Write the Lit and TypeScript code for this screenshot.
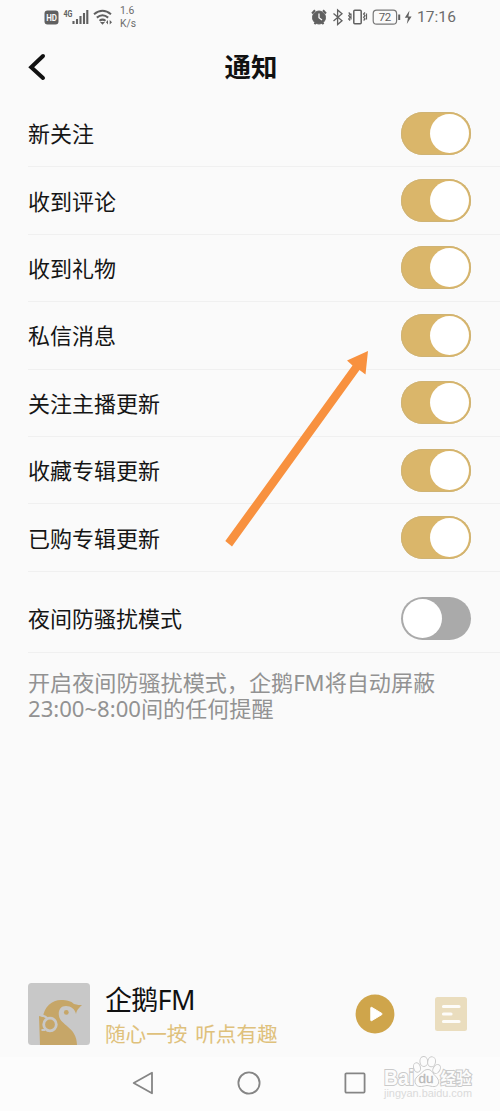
import { LitElement, html, css, svg } from "lit";
import { customElement, property } from "lit/decorators.js";
import { classMap } from "lit/directives/class-map.js";

@customElement("toggle-switch")
class ToggleSwitch extends LitElement {
  @property({ type: Boolean }) on = false;
  static styles = css`
    :host { display: block; flex: none; }
    .track { box-sizing: border-box; display: flex; align-items: center; width: 70px; height: 43px; padding: 0 2px; border-radius: 22px; background: #aaa; }
    .track.on { justify-content: flex-end; background: #dab66a; box-shadow: inset 0 0 0 1px #cfb374; }
    .knob { width: 39px; height: 39px; border-radius: 50%; background: #fff; }
  `;
  render() {
    return html`<div class=${classMap({ track: true, on: this.on })}><div class="knob"></div></div>`;
  }
}

@customElement("status-bar")
class StatusBar extends LitElement {
  static styles = css`
    :host { display: flex; justify-content: space-between; height: 34px; box-sizing: border-box; padding: 0 44px 0 43px; color: #6c6c6c; font-family: Roboto, sans-serif; }
    svg { display: block; }
    .left { display: flex; }
    .net { display: flex; flex-direction: column; font-size: 10.3px; line-height: 12.5px; padding: 5px 0 0 4px; }
    .right { display: flex; }
    .time { font-size: 15.5px; line-height: 35px; letter-spacing: 0.1px; margin-left: 3px; }
  `;
  render() {
    return html`
      <div class="left">
        <svg width="73" height="34" viewBox="43 0 73 34">
          <rect x="44.5" y="10.5" width="14" height="14" rx="3" fill="#606060" />
          <text x="46.2" y="21.4" font-size="9.5" font-weight="700" fill="#fafafa" textLength="10.8" lengthAdjust="spacingAndGlyphs">HD</text>
          <text x="63.5" y="16.5" font-size="9" font-weight="700" fill="#606060" textLength="9" lengthAdjust="spacingAndGlyphs">4G</text>
          <path d="M73.5 24v-3M77 24v-5M80.5 24v-8M84 24v-11M87.3 24v-14" stroke="#606060" stroke-width="2.1" />
          <path d="M94 14.2q8.5-7 17 0M96.8 17.6q5.7-4.6 11.4 0M99.5 20.8q3-2.4 6 0" fill="none" stroke="#606060" stroke-width="2" />
          <path d="M100 22h5l-2.5 2.8z" fill="#606060" />
          <path d="M106 22.3l2-2.3v4.6zM112 22.3l-2.3-2.3v4.6z" fill="#606060" />
        </svg>
        <div class="net"><span>1.6</span><span>K/s</span></div>
      </div>
      <div class="right">
        <svg width="104" height="34" viewBox="310 0 104 34" fill="none" stroke="#606060">
          <circle cx="319" cy="17.5" r="6.5" fill="#606060" />
          <path d="M312 13.5l3-3.2M326 13.5l-3-3.2M314.5 24.2l1.2-1.6M323.5 24.2l-1.2-1.6" stroke-width="2" />
          <path d="M319 13.5v4.2l3 2.3" stroke="#fafafa" stroke-width="1.3" />
          <path d="M333.5 13.5l8.5 7.2-4.4 3.8v-14.5l4.4 3.7-8.5 7.3" stroke-width="1.3" />
          <rect x="353.8" y="10.2" width="7.4" height="13.6" rx="1" stroke-width="1.5" />
          <path d="M348.7 12.5l1.4 1.6-1.4 1.6 1.4 1.6-1.4 1.6 1.4 1.6M351 13.5v6M365 12.5l-1.4 1.6 1.4 1.6-1.4 1.6 1.4 1.6-1.4 1.6M366.5 13.5v6" stroke-width="1.2" />
          <rect x="373.2" y="10.2" width="23.4" height="14" rx="3.5" stroke="#777" stroke-width="1.2" />
          <text x="378.7" y="21.3" font-size="11.5" fill="#606060" stroke="none" textLength="12.5">72</text>
          <path d="M399.2 14.5v5.5" stroke-width="2" />
          <path d="M409.5 10.5l-4.7 7.3h3.2l-1.2 6.2 4.8-7.5h-3.2z" fill="#606060" stroke="none" />
        </svg>
        <span class="time">17:16</span>
      </div>`;
  }
}

@customElement("setting-row")
class SettingRow extends LitElement {
  @property() label = "";
  @property({ type: Boolean }) on = false;
  static styles = css`
    :host { display: flex; justify-content: space-between; align-items: center; box-sizing: border-box; height: 67.4px; margin-left: 28px; padding-right: 29px; border-bottom: 1px solid #f0f0f0; }
    .label { font-size: 22px; line-height: 30px; color: #151515; }
  `;
  render() {
    return html`<span class="label">${this.label}</span><toggle-switch ?on=${this.on}></toggle-switch>`;
  }
}

@customElement("mini-player")
class MiniPlayer extends LitElement {
  static styles = css`
    :host { display: flex; align-items: flex-start; padding: 0 33px 0 28px; height: 74px; }
    svg { display: block; flex: none; }
    .info { display: flex; flex-direction: column; flex: 1; padding-left: 15px; white-space: nowrap; }
    .name { font-size: 27px; line-height: 34px; color: #101010; letter-spacing: -0.7px; }
    .sub { font-size: 20.6px; line-height: 34px; color: #dfc17c; word-spacing: 2.5px; }
    .play { margin: 11px 40px 0 0; }
    .list { margin-top: 14px; }
  `;
  render() {
    return html`
      <svg width="62" height="62" viewBox="0 0 62 62">
        <rect width="62" height="62" rx="3.5" fill="#c8c8c8" />
        <path d="M12 62L11 33l4 1C16 24 24 17 33 17c6 0 10 1 13 4 3 1 6 1 8 1-2 2-5 4-6 9-1-5-5-8-10-8-6 0-8 5-7 10 1 9 18 11 18 29z" fill="#c6a668" />
        <circle cx="38.3" cy="29.4" r="2.4" fill="#c6a668" />
        <circle cx="22" cy="41.5" r="6.3" fill="#c6a668" stroke="#c8c8c8" stroke-width="2.8" />
        <path d="M13.5 32.5q5 1 6 3.5M13.5 47l3.5 0" fill="none" stroke="#c8c8c8" stroke-width="2" />
      </svg>
      <div class="info">
        <span class="name">企鹅FM</span>
        <span class="sub">随心一按 听点有趣</span>
      </div>
      <svg class="play" width="40" height="40" viewBox="0 0 40 40">
        <circle cx="20" cy="20" r="19.4" fill="#cfa54b" />
        <path d="M15.8 13.8v12.4q0 1 1 .4l10-6q.8-.6 0-1.2l-10-6q-1-.5-1 .4z" fill="#fff" stroke="#fff" stroke-linejoin="round" />
      </svg>
      <svg class="list" width="32" height="34" viewBox="0 0 32 34">
        <rect width="32" height="34" rx="2.5" fill="#eaddbe" />
        <path d="M8.5 9.5h15.5M8.5 17h7.5M8.5 24.5h15.5" stroke="#fdfcf9" stroke-width="3.2" stroke-linecap="round" />
      </svg>`;
  }
}

@customElement("site-watermark")
class SiteWatermark extends LitElement {
  static styles = css`
    :host { display: block; }
    svg { display: block; font-family: "Liberation Sans", "Noto Sans CJK SC", sans-serif; }
  `;
  render() {
    const toes = [[417, 1067.5, 3.4, 4.8, -15], [423.8, 1061.5, 3.9, 5, -5], [431.6, 1061.8, 3.9, 5, 10], [436.6, 1069, 3.4, 4.8, 30]];
    return html`<svg width="98" height="50" viewBox="380 1055 98 50" fill="#fcfcfc" stroke="#cacaca" stroke-width="1">
      ${toes.map(([x, y, rx, ry, a]) => svg`<ellipse cx=${x} cy=${y} rx=${rx} ry=${ry} transform="rotate(${a} ${x} ${y})" />`)}
      <g paint-order="stroke" stroke-width="2">
        <text x="384" y="1085" font-size="21.5" font-weight="700" textLength="30" lengthAdjust="spacingAndGlyphs">Bai</text>
        <text x="440.5" y="1083.5" font-size="15.5" font-weight="700" textLength="31" lengthAdjust="spacingAndGlyphs">经验</text>
      </g>
      <path d="M416 1084.5c-3-5 1-8 5-11 3-3 4-4 7-4 3 0 4 2 6 5 3 3 6 6 4 10-3 4-8 1-11 1s-8 3-11-1z" />
      <text x="418.5" y="1082.5" font-size="13" fill="#b8b8b8" stroke="#b8b8b8" stroke-width=".3" textLength="15" lengthAdjust="spacingAndGlyphs">du</text>
      <text x="384" y="1096.5" font-size="10" fill="#dadada" stroke="none" textLength="88" lengthAdjust="spacingAndGlyphs">jingyan.baidu.com</text>
    </svg>`;
  }
}

@customElement("app-root")
class AppRoot extends LitElement {
  static styles = css`
    :host { display: flex; flex-direction: column; position: relative; width: 500px; height: 1111px; overflow: hidden; background: #fafafa; font-family: "Noto Sans", "Noto Sans CJK SC", sans-serif; }
    svg { display: block; }
    .header { display: grid; grid-template-columns: 1fr auto 1fr; align-items: center; height: 66px; padding: 0 26px 0 28px; box-sizing: border-box; }
    h1 { margin: 0; font-size: 26.5px; line-height: 36px; font-weight: 700; color: #111; }
    .night { margin-top: 13.5px; }
    .note { display: flex; flex-direction: column; margin: 16px 28px 0; font-size: 22.1px; line-height: 26.4px; color: #929292; white-space: nowrap; }
    .spacer { flex: 1; }
    .nav { display: flex; justify-content: space-between; align-items: center; height: 54px; padding: 0 134px 2px 132px; box-sizing: border-box; background: #fcfcfc; }
    .arrow { position: absolute; left: 220px; top: 345px; }
    .mark { position: absolute; left: 380px; top: 1055px; }
  `;
  private items = ["新关注", "收到评论", "收到礼物", "私信消息", "关注主播更新", "收藏专辑更新", "已购专辑更新"];
  render() {
    return html`
      <status-bar></status-bar>
      <div class="header">
        <svg width="20" height="28" viewBox="0 0 20 28"><path d="M15 3L3.2 14.2 15 25" fill="none" stroke="#111" stroke-width="4" stroke-linecap="round" /></svg>
        <h1>通知</h1>
      </div>
      ${this.items.map((label) => html`<setting-row label=${label} on></setting-row>`)}
      <setting-row class="night" label="夜间防骚扰模式"></setting-row>
      <div class="note"><span>开启夜间防骚扰模式，企鹅FM将自动屏蔽</span><span>23:00~8:00间的任何提醒</span></div>
      <div class="spacer"></div>
      <mini-player></mini-player>
      <div class="nav">
        <svg width="22" height="24" viewBox="0 0 22 24"><path d="M20 1.7v20.6L1.7 12z" fill="none" stroke="#858585" stroke-width="1.8" stroke-linejoin="round" /></svg>
        <svg width="24" height="24" viewBox="0 0 24 24"><circle cx="12" cy="12" r="10.6" fill="none" stroke="#858585" stroke-width="1.8" /></svg>
        <svg width="22" height="22" viewBox="0 0 22 22"><rect x="1.4" y="1.4" width="19.2" height="19.2" rx="1" fill="none" stroke="#858585" stroke-width="1.8" /></svg>
      </div>
      <svg class="arrow" width="155" height="205" viewBox="220 345 155 205"><path d="M225.3 541L352.5 365.5l-5.5-5 21-9.5-2.5 23.5-6-4.5L232 546.5z" fill="#f8913f" /></svg>
      <site-watermark class="mark"></site-watermark>`;
  }
}
